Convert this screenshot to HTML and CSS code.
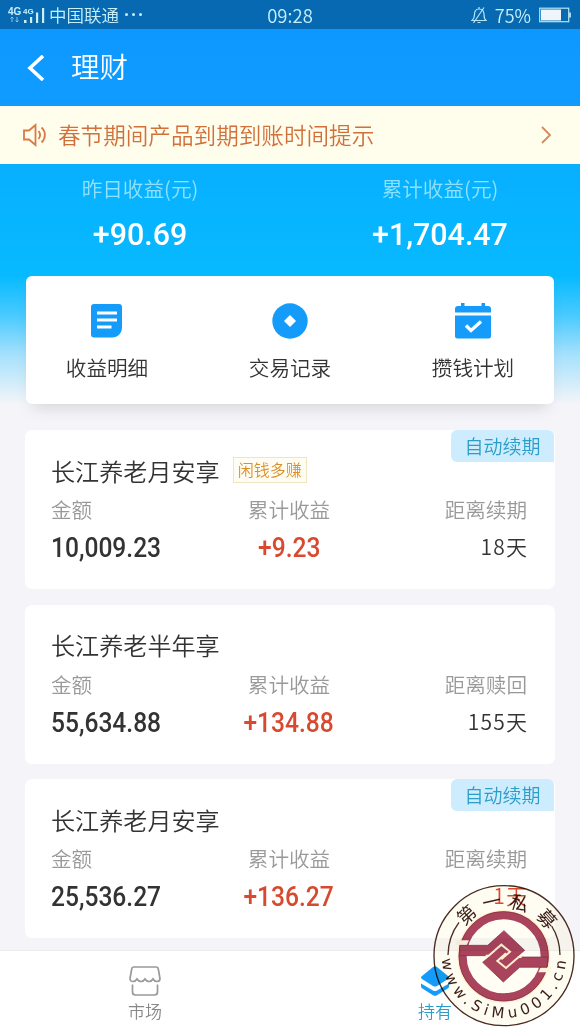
FILE: index.html
```html
<!DOCTYPE html>
<html lang="zh-CN">
<head>
    <meta charset="UTF-8">
    <meta name="viewport" content="width=device-width, initial-scale=1.0">
    <title>理财</title>
    <link rel="stylesheet" href="styles.css">
</head>
<body>
    <div class="app">
        <!-- Status bar -->
        <div class="status-bar">
            <div class="status-left">
                <svg class="signal" width="38" height="18" viewBox="0 0 38 18">
                    <text x="0" y="9" class="signal-text">4G</text>
                    <text x="15" y="8" class="signal-text small">4G</text>
                    <path d="M4 11v5M2.500 12.500 4 11l1.500 1.500M9 11v5M7.500 14.500 9 16l1.500-1.500" fill="none" stroke="#8cc4e6" stroke-width="1"/>
                    <path d="M16 14h2.500v3H16zM22 11h2.200v6H22zM28 6.500h2.200V17H28zM34 2h2.200v15H34z" fill="#c8f0fb"/>
                </svg>
                <span class="carrier">中国联通</span>
                <span class="dots"><i></i><i></i><i></i></span>
            </div>
            <div class="status-time">09:28</div>
            <div class="status-right">
                <svg width="16" height="18" viewBox="0 0 16 18" fill="none" stroke="#b5e6f8" stroke-width="1.200">
                    <path d="M1 14.500h14c-1.800-1.500-2-3-2-6 0-3-1.800-5.500-5-5.500S3.500 5.500 3.500 8.500c0 3-.7 4.500-2.500 6zM8 3V1M6.500 16.500h3M2.500 17 13 1.500"/>
                </svg>
                <span class="percent">75%</span>
                <svg width="33" height="16" viewBox="0 0 33 16">
                    <rect x=".7" y="1.200" width="29" height="13.500" fill="none" stroke="#b5e6f8" stroke-width="1.200"/>
                    <rect x="2" y="2.500" width="20" height="11" fill="#eef6fc"/>
                    <path d="M31 5.500v5" stroke="#b5e6f8" stroke-width="1.800"/>
                </svg>
            </div>
        </div>

        <!-- Header -->
        <div class="header">
            <svg width="18" height="26" viewBox="0 0 18 26">
                <path d="M16 1 3 13l13 12" fill="none" stroke="#fff" stroke-width="3.600"/>
            </svg>
            <h1>理财</h1>
        </div>

        <!-- Notice -->
        <div class="notice">
            <svg width="25" height="24" viewBox="0 0 25 24" fill="none" stroke="#d97a45" stroke-width="1.800">
                <path d="M1 7.500h5l6.500-5.500v20L6 16.500H1zM15.500 8c2 2.500 2 5.500 0 8M18.500 4.500c4.500 4 4.500 11 0 15"/>
            </svg>
            <span class="notice-text">春节期间产品到期到账时间提示</span>
            <svg width="11" height="18" viewBox="0 0 11 18">
                <path d="M1 1l8 8-8 8" fill="none" stroke="#d68a5c" stroke-width="1.800"/>
            </svg>
        </div>

        <!-- Earnings summary -->
        <div class="summary">
            <div class="summary-item">
                <div class="summary-label">昨日收益(元)</div>
                <div class="summary-value">+90.69</div>
            </div>
            <div class="summary-item">
                <div class="summary-label">累计收益(元)</div>
                <div class="summary-value">+1,704.47</div>
            </div>
        </div>

        <!-- Shortcuts -->
        <div class="shortcuts">
            <div class="shortcut">
                <svg width="36" height="36" viewBox="0 0 36 36">
                    <path d="M5 1h25a3 3 0 0 1 3 3v20c0 6-4 10.500-10 10.500H5a3 3 0 0 1-3-3V4a3 3 0 0 1 3-3z" fill="#159cfb"/>
                    <path d="M8 10h20M8 17h20M8 24h14.500" stroke="#fff" stroke-width="3.200"/>
                </svg>
                <span>收益明细</span>
            </div>
            <div class="shortcut">
                <svg width="36" height="36" viewBox="0 0 36 36">
                    <circle cx="18" cy="18" r="17.700" fill="#159cfb"/>
                    <path d="M18 12l6 6-6 6-6-6z" fill="#fff"/>
                </svg>
                <span>交易记录</span>
            </div>
            <div class="shortcut">
                <svg width="36" height="36" viewBox="0 0 36 36">
                    <path d="M0 9.500V6a3 3 0 0 1 3-3h3V0h3.500v3h17V0H30v3h3a3 3 0 0 1 3 3v3.500zM0 12.500h36V33a2.500 2.500 0 0 1-2.500 2.500h-31A2.500 2.500 0 0 1 0 33z" fill="#159cfb"/>
                    <path d="M11 22.500l5 5 10-9" fill="none" stroke="#fff" stroke-width="3.400"/>
                </svg>
                <span>攒钱计划</span>
            </div>
        </div>

        <!-- Product list -->
        <div class="products">
            <div class="product">
                <div class="badge">自动续期</div>
                <div class="product-name">长江养老月安享<span class="tag">闲钱多赚</span></div>
                <div class="product-row labels">
                    <span>金额</span><span>累计收益</span><span>距离续期</span>
                </div>
                <div class="product-row values">
                    <span class="amount">10,009.23</span><span class="profit">+9.23</span><span class="days">18天</span>
                </div>
            </div>
            <div class="product">
                <div class="product-name">长江养老半年享</div>
                <div class="product-row labels">
                    <span>金额</span><span>累计收益</span><span>距离赎回</span>
                </div>
                <div class="product-row values">
                    <span class="amount">55,634.88</span><span class="profit">+134.88</span><span class="days">155天</span>
                </div>
            </div>
            <div class="product">
                <div class="badge">自动续期</div>
                <div class="product-name">长江养老月安享</div>
                <div class="product-row labels">
                    <span>金额</span><span>累计收益</span><span>距离续期</span>
                </div>
                <div class="product-row values">
                    <span class="amount">25,536.27</span><span class="profit">+136.27</span><span class="days soon">1天</span>
                </div>
            </div>
        </div>

        <!-- Tab bar -->
        <div class="tab-bar">
            <div class="tab">
                <svg width="32" height="32" viewBox="0 0 32 32" fill="none" stroke="#999" stroke-width="1.700">
                    <path d="M5 2h22q2 0 2.300 2L31 13.500q0 3-3 3-2.500 0-4-2.500-1.500 2.500-4 2.500T16 14q-1.500 2.500-4 2.500T8 14q-1.500 2.500-4 2.500-3 0-3-3L2.700 4Q3 2 5 2zM3.500 19.500V27q0 3 3 3h19q3 0 3-3v-7.500"/>
                </svg>
                <span>市场</span>
            </div>
            <div class="tab active">
                <svg width="32" height="32" viewBox="0 0 32 32">
                    <path d="M14 2q2-1.500 4 0l11 9q2 1.500 0 3l-11 7q-2 1.200-4 0L3 14q-2-1.500 0-3z" fill="#159cfb"/>
                    <path d="M2 18.500l12 7q2 1.200 4 0l12-7v3q0 1-1 1.700l-11 7q-2 1.200-4 0l-11-7q-1-.7-1-1.700z" fill="#159cfb"/>
                </svg>
                <span>持有</span>
            </div>
        </div>

        <!-- Seal over the corner -->
        <svg class="seal" width="144" height="144" viewBox="-69 -72 432 432">
            <defs>
                <path id="seal-arc" d="M-40 143a187 187 0 0 0 374 0"/>
            </defs>
            <circle cx="147" cy="143" r="210" fill="#fffdf2" stroke="#4b2b20" stroke-width="4"/>
            <path d="M-21 141A168 168 0 0 1 12 43M315 141A168 168 0 0 0 290 54" fill="none" stroke="#4b2b20" stroke-width="4"/>
            <circle cx="146" cy="145" r="139" fill="#fff0c8"/>
            <circle cx="146" cy="145" r="123" fill="#fffdf4" stroke="#aa435c" stroke-width="24"/>
            <circle cx="146" cy="145" r="134" fill="none" stroke="#8a3048" stroke-width="2"/>
            <path d="M4 97h38l-7 15H4zM288 178h-31l-7 15h38z" fill="#fff6dc"/>
            <path d="M14 112H98L147 68l62 59-24 20h94l-3 31h-82l-49 44-62-59 24-20H14z" fill="#aa435c" stroke="#743044" stroke-width="2"/>
            <path d="M92 143h9l38-33 26 21-26 23M200 147h-9l-38 33-26-21 26-23" fill="none" stroke="#fff3cf" stroke-width="6"/>
            <g class="seal-name">
                <text transform="translate(35 21) rotate(-42)" y="20">第</text>
                <text transform="translate(110 -19) rotate(-13)" y="20">一</text>
                <text transform="translate(193 -14) rotate(17)" y="20">私</text>
                <text transform="translate(275 33) rotate(48)" y="20">募</text>
            </g>
            <text class="seal-url"><textPath href="#seal-arc" startOffset="10" textLength="562">www.SiMu001.cn</textPath></text>
        </svg>
    </div>
</body>
</html>
```
FILE: styles.css
```css
body {
    margin: 0;
    font-family: "Noto Sans CJK SC", sans-serif;
    font-weight: 350;
    color: #333;
    background-color: #f5f5f9;
}

.app {
    position: relative;
    display: flex;
    flex-direction: column;
    width: 580px;
    height: 1031px;
    overflow: hidden;
    background: linear-gradient(#0c98ff 29px, #109cff 106px, #08afff 165px, #07baff 276px, #48caff 315px, #a5e1fc 355px, #f5f5f9 405px);
}

/* Status bar */
.status-bar {
    display: grid;
    grid-template-columns: 1fr auto 1fr;
    align-items: center;
    height: 29px;
    padding: 0 8px;
    box-sizing: border-box;
    background-color: #0669b1;
    color: #c8f0fb;
    font-size: 18px;
}

.status-left, .status-right {
    display: flex;
    align-items: center;
}

.status-right {
    justify-content: flex-end;
    gap: 8px;
}

.signal-text {
    font-family: "Liberation Sans", sans-serif;
    font-weight: bold;
    font-size: 10px;
    fill: #c8f0fb;
}

.signal-text.small {
    font-size: 8px;
}

.carrier {
    margin-left: 3px;
    font-size: 17.5px;
}

.dots {
    display: flex;
    gap: 4px;
    margin-left: 6px;
}

.dots i {
    width: 3px;
    height: 3px;
    border-radius: 50%;
    background-color: #c8f0fb;
}

.status-time {
    font-size: 18.5px;
}

/* Header */
.header {
    display: flex;
    align-items: center;
    gap: 26px;
    height: 77px;
    padding-left: 27px;
    color: #fff;
}

.header h1 {
    margin: 0;
    padding-bottom: 4px;
    font-size: 28.5px;
    font-weight: 350;
}

/* Notice */
.notice {
    display: flex;
    align-items: center;
    height: 58px;
    padding: 0 28px 0 23px;
    box-sizing: border-box;
    background-color: #fffeec;
    color: #d2703c;
}

.notice-text {
    flex: 1;
    margin-left: 10px;
    padding-bottom: 2px;
    font-size: 22.6px;
}

/* Summary */
.summary {
    display: flex;
    justify-content: space-between;
    height: 112px;
}

.summary-item {
    width: 280px;
    text-align: center;
}

.summary-label {
    margin-top: 7px;
    height: 36px;
    line-height: 35px;
    font-size: 20.6px;
    color: #8fe2fd;
}

.summary-value {
    line-height: 54px;
    font-family: Roboto, sans-serif;
    font-size: 32px;
    font-weight: 500;
    color: #fff;
    transform: scaleX(0.95);
}

/* Shortcuts */
.shortcuts {
    display: grid;
    grid-template-columns: repeat(3, 183px);
    justify-content: center;
    height: 128px;
    margin: 0 26px;
    border-radius: 6px;
    background-color: #fff;
    box-shadow: 0 10px 14px -7px rgba(90, 80, 90, 0.22);
}

.shortcut {
    display: flex;
    flex-direction: column;
    align-items: center;
    padding-top: 27px;
    font-size: 20.6px;
}

.shortcut span {
    margin-top: 13px;
    line-height: 30px;
}

/* Products */
.products {
    display: flex;
    flex-direction: column;
    gap: 15.5px;
    margin: 26px 25px 0;
}

.product {
    position: relative;
    height: 159px;
    padding: 21px 28px 0 26px;
    box-sizing: border-box;
    border-radius: 7px;
    background-color: #fff;
}

.badge {
    position: absolute;
    top: 0;
    right: 1px;
    width: 103px;
    height: 32px;
    line-height: 31px;
    border-radius: 6px 6px 0 6px;
    background-color: #cdedfe;
    color: #2c9dc8;
    font-size: 19px;
    text-align: center;
}

.product-name {
    display: flex;
    align-items: center;
    height: 38px;
    font-size: 24.1px;
}

.tag {
    margin-left: 13px;
    padding: 0 4px;
    height: 24px;
    line-height: 22px;
    border: 1px solid #f2e3c2;
    background-color: #fffdf2;
    color: #dc8f2d;
    font-size: 16px;
}

.product-row {
    display: grid;
    grid-template-columns: 1fr auto 1fr;
}

.product-row span:last-child {
    text-align: right;
}

.labels {
    line-height: 41px;
    font-size: 20.6px;
    color: #999;
}

.values {
    line-height: 36px;
    font-size: 27px;
}

.amount, .profit {
    font-family: Roboto, sans-serif;
    font-weight: 500;
    transform: scaleX(0.91);
}

.amount {
    transform-origin: left;
}

.profit {
    color: #d84a30;
}

.days {
    margin-right: -1.2px;
    font-size: 21px;
    line-height: 33px;
    letter-spacing: 1.2px;
}

.days.soon {
    color: #d84a30;
}

/* Tab bar */
.tab-bar {
    display: flex;
    height: 81px;
    margin-top: auto;
    box-sizing: border-box;
    border-top: 1px solid #ececf0;
    background-color: #fff;
}

.tab {
    display: flex;
    flex: 1;
    flex-direction: column;
    align-items: center;
    padding-top: 14px;
    color: #888;
    font-size: 17px;
}

.tab span {
    line-height: 28px;
}

.tab.active {
    color: #2c9dc8;
}

/* Seal */
.seal {
    position: absolute;
    left: 432px;
    top: 884px;
    mix-blend-mode: multiply;
}

.seal-name {
    font-size: 56px;
    font-weight: 400;
    text-anchor: middle;
    fill: #3c211a;
}

.seal-url {
    font-family: "DejaVu Sans", sans-serif;
    font-size: 45px;
    font-weight: 400;
    fill: #3c211a;
}
```
